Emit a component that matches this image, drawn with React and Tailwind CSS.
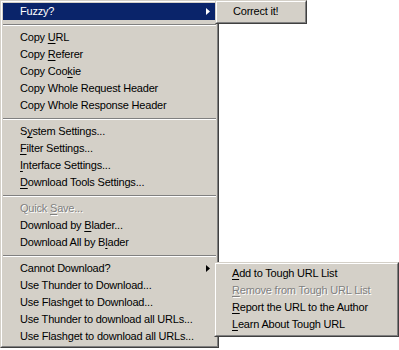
import React from "react";

const font = "font-['Liberation_Sans',Arial,sans-serif] text-[11px] leading-none tracking-[-0.2px]";

// mnemonic letter
const U = ({ children }) => <span className="underline underline-offset-[2px] decoration-[1px]">{children}</span>;

function Arrow({ white }) {
  return (
    <svg width="4" height="7" viewBox="0 0 4 7" className="shrink-0">
      <path d="M0 0 L4 3.5 L0 7 Z" fill={white ? "#ffffff" : "#000000"} />
    </svg>
  );
}

function Item({ children, active, disabled, sub, pl = "pl-[17px]" }) {
  return (
    <div
      className={`h-[17px] flex items-center justify-between ${pl} pr-[6px] whitespace-nowrap ${
        active ? "bg-[#0a246a] text-white" : disabled ? "text-[#808080] [text-shadow:1px_1px_0_#ffffff]" : "text-black"
      }`}
    >
      <span>{children}</span>
      {sub && <Arrow white={active} />}
    </div>
  );
}

function Sep() {
  return (
    <div className="h-[9px] flex items-center">
      <div className="w-full border-t border-t-[#808080] border-b border-b-white" />
    </div>
  );
}

function Frame({ className, children }) {
  return (
    <div className={`bg-[#d4d0c8] border border-t-[#d4d0c8] border-l-[#d4d0c8] border-r-[#404040] border-b-[#404040] ${className}`}>
      <div className="h-full border border-t-white border-l-white border-r-[#808080] border-b-[#808080] p-[1px]">
        {children}
      </div>
    </div>
  );
}

export default function App() {
  return (
    <div className={`relative w-[399px] h-[350px] bg-white overflow-hidden ${font}`}>
      {/* main context menu */}
      <Frame className="w-[219px] h-[348px]">
        <Item active sub>Fuzzy?</Item>
        <Sep />
        <Item>Copy <U>U</U>RL</Item>
        <Item>Copy <U>R</U>eferer</Item>
        <Item>Copy Coo<U>k</U>ie</Item>
        <Item>Copy Whole Request Header</Item>
        <Item>Copy Whole Response Header</Item>
        <Sep />
        <Item>S<U>y</U>stem Settings...</Item>
        <Item><U>F</U>ilter Settings...</Item>
        <Item><U>I</U>nterface Settings...</Item>
        <Item><U>D</U>ownload Tools Settings...</Item>
        <Sep />
        <Item disabled>Quick <U>S</U>ave...</Item>
        <Item>Download by <U>B</U>lader...</Item>
        <Item>Download All by B<U>l</U>ader</Item>
        <Sep />
        <Item sub>Cannot Download?</Item>
        <Item>Use Thunder to Download...</Item>
        <Item>Use Flashget to Download...</Item>
        <Item>Use Thunder to download all URLs...</Item>
        <Item>Use Flashget to download all URLs...</Item>
      </Frame>

      {/* Fuzzy? submenu */}
      <Frame className="absolute left-[215px] top-0 w-[92px] h-[24px]">
        <Item pl="pl-[15px]">Correct it!</Item>
      </Frame>

      {/* Cannot Download? submenu */}
      <Frame className="absolute left-[214px] top-[262px] w-[185px] h-[75px]">
        <Item pl="pl-[15px]"><U>A</U>dd to Tough URL List</Item>
        <Item pl="pl-[15px]" disabled><U>R</U>emove from Tough URL List</Item>
        <Item pl="pl-[15px]"><U>R</U>eport the URL to the Author</Item>
        <Item pl="pl-[15px]"><U>L</U>earn About Tough URL</Item>
      </Frame>
    </div>
  );
}
